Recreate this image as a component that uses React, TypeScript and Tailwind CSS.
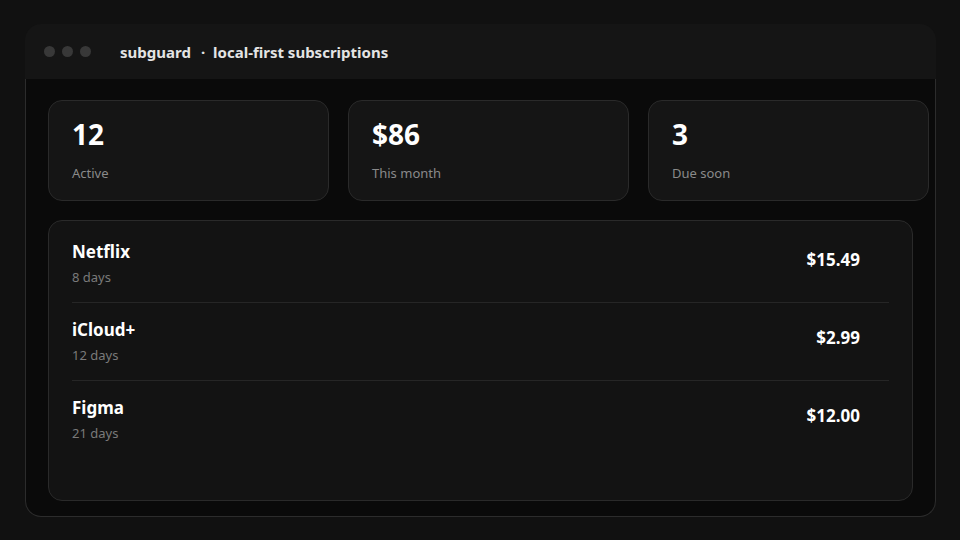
import React from 'react'

const stats = [
  { value: '12', label: 'Active' },
  { value: '$86', label: 'This month' },
  { value: '3', label: 'Due soon' },
]

const subs = [
  { name: 'Netflix', due: '8 days', price: '$15.49' },
  { name: 'iCloud+', due: '12 days', price: '$2.99' },
  { name: 'Figma', due: '21 days', price: '$12.00' },
]

export default function App() {
  return (
    <div
      className="w-[960px] h-[540px] overflow-hidden bg-[#111111] pt-6 pl-[25px]"
      style={{ fontFamily: '"Noto Sans", "Open Sans", sans-serif' }}
    >
      <div className="w-[911px]">
        {/* Title bar */}
        <div className="h-[55px] rounded-t-[16px] bg-[#151515] flex items-center pl-[19px]">
          <div className="flex items-center gap-[7px]">
            <span className="w-[11px] h-[11px] rounded-full bg-[#383838]" />
            <span className="w-[11px] h-[11px] rounded-full bg-[#383838]" />
            <span className="w-[11px] h-[11px] rounded-full bg-[#383838]" />
          </div>
          <p className="ml-[29px] mt-[1px] text-[15px] font-bold text-[#e4e4e4] leading-none">
            subguard<span className="ml-[10px] mr-[8px]">·</span>local-first subscriptions
          </p>
        </div>

        {/* Body */}
        <div className="h-[438px] bg-[#0a0a0a] border border-t-0 border-[#2c2c2c] rounded-b-[16px] pt-[21px] pl-[22px]">
          <div className="flex gap-[19px]">
            {stats.map(s => (
              <div
                key={s.label}
                className="shrink-0 w-[281px] h-[101px] rounded-[14px] bg-[#151515] border border-[#2a2a2a] pl-[23px] pt-[14px]"
              >
                <p className="text-[28px] font-bold text-white leading-[38px]">{s.value}</p>
                <p className="mt-[11px] text-[13px] text-[#8a8a8a] leading-[18px]">{s.label}</p>
              </div>
            ))}
          </div>

          <div className="mt-[19px] w-[865px] h-[281px] rounded-[14px] bg-[#131313] border border-[#2a2a2a] px-[23px] pt-[4px]">
            {subs.map((s, i) => (
              <div
                key={s.name}
                className={`flex items-center justify-between pt-[15px] pb-[16px] ${i < subs.length - 1 ? 'border-b border-[#262626]' : ''}`}
              >
                <div>
                  <p className="text-[17px] font-bold text-white leading-[24px]">{s.name}</p>
                  <p className="mt-[4px] text-[13px] text-[#7a7a7a] leading-[18px]">{s.due}</p>
                </div>
                <p className="pr-[29px] -mt-[6px] text-[17px] font-bold text-white leading-[24px]">{s.price}</p>
              </div>
            ))}
          </div>
        </div>
      </div>
    </div>
  )
}
